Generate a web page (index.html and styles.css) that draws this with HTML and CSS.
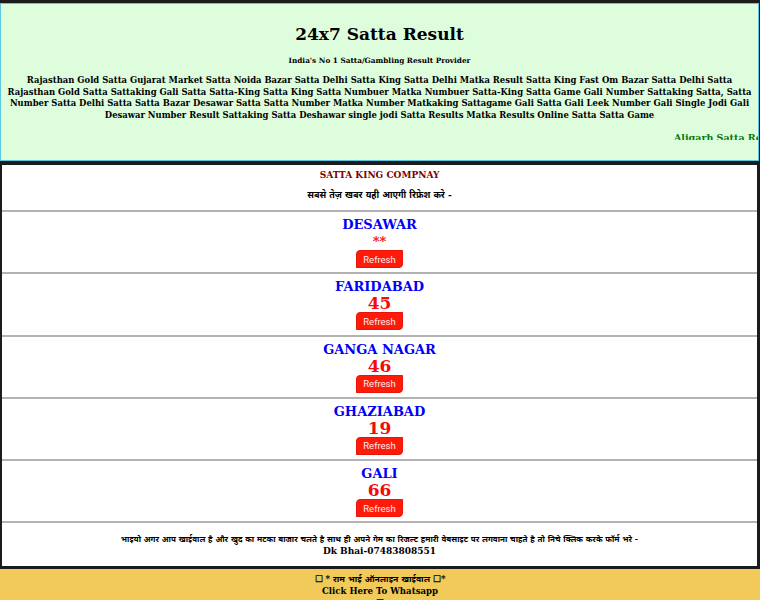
FILE: index.html
```html
<!DOCTYPE html>
<html>
<head>
<meta charset="utf-8">
<link rel="stylesheet" href="styles.css">
</head>
<body>
<div class="header">
  <h1 class="title">24x7 Satta Result</h1>
  <p class="tagline">India's No 1 Satta/Gambling Result Provider</p>
  <p class="keywords">Rajasthan Gold Satta Gujarat Market Satta Noida Bazar Satta Delhi Satta King Satta Delhi Matka Result Satta King Fast Om Bazar Satta Delhi Satta Rajasthan Gold Satta Sattaking Gali Satta Satta-King Satta King Satta Numbuer Matka Numbuer Satta-King Satta Game Gali Number Sattaking Satta, Satta Number Satta Delhi Satta Satta Bazar Desawar Satta Satta Number Matka Number Matkaking Sattagame Gali Satta Gali Leek Number Gali Single Jodi Gali Desawar Number Result Sattaking Satta Deshawar single jodi Satta Results Matka Results Online Satta Satta Game</p>
  <div class="marquee"><span class="marquee-text">Aligarh Satta Result</span></div>
</div>

<div class="board">
  <div class="intro">
    <div class="company">SATTA KING COMPNAY</div>
    <div class="notice">सबसे तेज़ खबर यही आएगी रिफ्रेश करे -</div>
  </div>

  <div class="game">
    <div class="game-name">DESAWAR</div>
    <div class="game-result stars">**</div>
    <button class="refresh">Refresh</button>
  </div>
  <div class="game">
    <div class="game-name">FARIDABAD</div>
    <div class="game-result">45</div>
    <button class="refresh">Refresh</button>
  </div>
  <div class="game">
    <div class="game-name">GANGA NAGAR</div>
    <div class="game-result">46</div>
    <button class="refresh">Refresh</button>
  </div>
  <div class="game">
    <div class="game-name">GHAZIABAD</div>
    <div class="game-result">19</div>
    <button class="refresh">Refresh</button>
  </div>
  <div class="game">
    <div class="game-name">GALI</div>
    <div class="game-result">66</div>
    <button class="refresh">Refresh</button>
  </div>

  <div class="contact">
    <div class="contact-text">भाइयो अगर आप खाईवाल है और खुद का मटका बाजार चलते है साथ ही अपने गेम का रिजल्ट हमारी वेबसाइट पर लगवाना चाहते है तो निचे क्लिक करके फॉर्म भरे -</div>
    <div class="contact-phone">Dk Bhai-07483808551</div>
  </div>
</div>

<div class="whatsapp">
  <div class="wa-line">☐ * राम भाई ऑनलाइन खाईवाल ☐*</div>
  <div class="wa-line">Click Here To Whatsapp</div>
  <div class="wa-line">☐</div>
</div>
</body>
</html>
```

FILE: styles.css
```css
html, body {
  margin: 0;
  padding: 0;
}
body {
  background: #1b1b1b;
  padding-top: 3px;
  font-family: "DejaVu Serif", "Noto Sans", serif;
  font-weight: bold;
  color: #000;
  overflow: hidden;
  height: 597px;
}
.header {
  background: #ddfddd;
  border: 1px solid #5cc6de;
  margin-right: 1px;
  height: 156px;
  text-align: center;
  overflow: hidden;
}
.title {
  margin: 18px 0 0;
  font-size: 17px;
  line-height: 24px;
  font-weight: bold;
}
.tagline {
  margin: 9px 0 0;
  font-size: 7.3px;
  line-height: 12px;
}
.keywords {
  margin: 8px 1px 0;
  font-size: 8.45px;
  line-height: 11.6px;
}
.marquee {
  margin-top: 5px;
  height: 14px;
  overflow: hidden;
  white-space: nowrap;
  text-align: left;
  padding-left: 673px;
}
.marquee-text {
  color: #0a7a0a;
  font-size: 9.5px;
  line-height: 14px;
}
.board {
  background: #fff;
  margin: 4px 3px 0 2px;
  height: 401px;
  text-align: center;
  overflow: hidden;
}
.intro {
  height: 45px;
  padding-top: 2px;
  box-sizing: border-box;
}
.company {
  color: #7a0000;
  font-size: 9px;
  line-height: 16px;
}
.notice {
  margin-top: 4px;
  font-size: 9px;
  line-height: 16px;
}
.game {
  border-top: 2px solid #b3b3b3;
  height: 62.3px;
  padding-top: 5px;
  box-sizing: border-box;
  display: flex;
  flex-direction: column;
  align-items: center;
}
.game-name {
  color: #0000f5;
  font-size: 13px;
  line-height: 16px;
}
.game-result {
  color: #f50a0a;
  font-size: 17px;
  line-height: 17px;
}
.stars {
  font-size: 13px;
}
.refresh {
  width: 47px;
  height: 18px;
  padding: 0;
  border: 1px solid #e8150a;
  background: #ff1a0a;
  color: #ffecec;
  font-family: Roboto, "Liberation Sans", sans-serif;
  font-size: 9.5px;
  font-weight: normal;
  border-radius: 4px 0 4px 0;
}
.contact {
  border-top: 2px solid #b3b3b3;
  padding-top: 10px;
}
.contact-text {
  font-size: 8px;
  line-height: 12px;
}
.contact-phone {
  font-size: 9px;
  line-height: 12px;
}
.whatsapp {
  background: #f1ca5a;
  margin-top: 3px;
  text-align: center;
  padding-top: 4px;
  height: 40px;
}
.wa-line {
  font-size: 8.6px;
  line-height: 12px;
}
```
